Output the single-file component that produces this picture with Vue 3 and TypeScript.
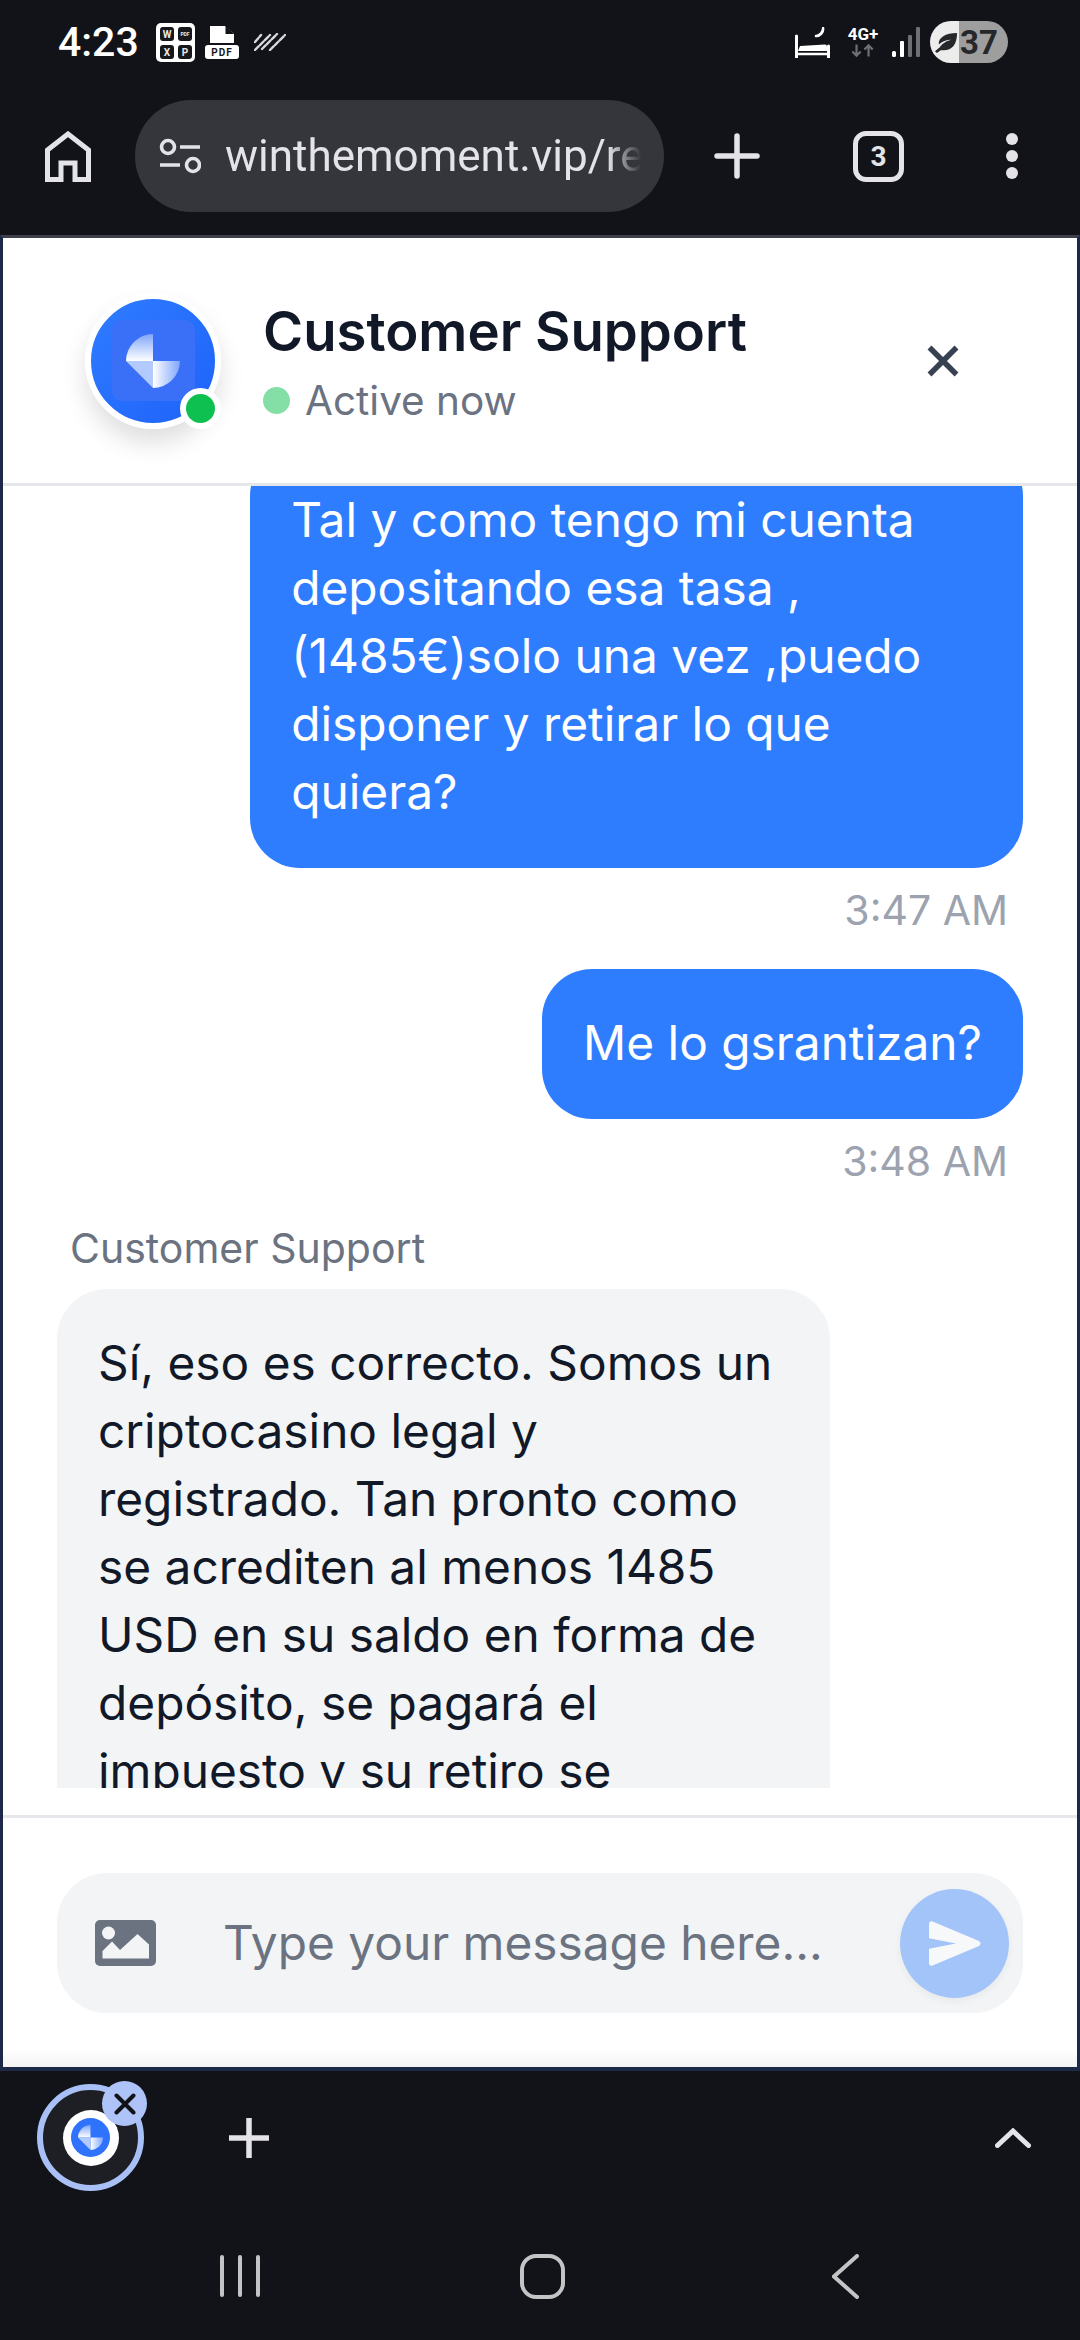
<script setup lang="ts">
import { onMounted, ref } from 'vue';

interface Message {
  id: number;
  mine: boolean;
  text: string;
  time?: string;
  sender?: string;
}

const messages: Message[] = [
  {
    id: 1,
    mine: true,
    text: 'Tal y como tengo mi cuenta depositando esa tasa , (1485€)solo una vez ,puedo disponer y retirar lo que quiera?',
    time: '3:47 AM',
  },
  { id: 2, mine: true, text: 'Me lo gsrantizan?', time: '3:48 AM' },
  {
    id: 3,
    mine: false,
    sender: 'Customer Support',
    text: 'Sí, eso es correcto. Somos un criptocasino legal y registrado. Tan pronto como se acrediten al menos 1485 USD en su saldo en forma de depósito, se pagará el impuesto y su retiro se',
  },
];

const scroller = ref<HTMLElement | null>(null);

onMounted(() => {
  // the conversation is scrolled a little past the first bubble's top
  if (scroller.value) scroller.value.scrollTop = 40;
});
</script>

<template>
  <div class="phone">
    <svg class="defs" width="0" height="0">
      <defs>
        <linearGradient id="logoTop" x1="0" y1="0" x2="0" y2="1">
          <stop offset="0" stop-color="#7fa6fc" />
          <stop offset="1" stop-color="#ffffff" />
        </linearGradient>
        <linearGradient id="logoSide" x1="0" y1="0" x2="1" y2="0">
          <stop offset="0" stop-color="#ffffff" />
          <stop offset="1" stop-color="#7fa6fc" />
        </linearGradient>
      </defs>
    </svg>

    <div class="status">
      <span class="clock">4:23</span>
      <svg class="ic-apps" viewBox="0 0 39 39">
        <rect width="39" height="39" rx="5" fill="#fff" />
        <rect x="4" y="4" width="14" height="14" rx="3" fill="#17181c" />
        <rect x="22" y="4" width="14" height="14" rx="3" fill="#17181c" />
        <rect x="4" y="22" width="14" height="14" rx="3" fill="#17181c" />
        <rect x="22" y="22" width="14" height="14" rx="3" fill="#17181c" />
        <text x="11" y="14.5" class="tile">W</text>
        <text x="29" y="12.5" class="tile tile-sm">PDF</text>
        <text x="11" y="33" class="tile">X</text>
        <text x="29" y="33" class="tile">P</text>
      </svg>
      <svg class="ic-pdf" viewBox="0 0 34 33">
        <path d="M5 0H20L29 8V17H5Z" fill="#fff" />
        <path d="M20.500 0L29 8H20.500Z" fill="#111318" />
        <rect y="19" width="34" height="14" rx="3" fill="#fff" />
        <text x="17" y="30" class="pdf-label">PDF</text>
      </svg>
      <svg class="ic-slash" viewBox="0 0 32 18">
        <path
          d="M1 9L7 2M1 17L16 2M8 16L23 1M16 17L31 2"
          stroke="#d8d8dc"
          stroke-width="2.400"
          stroke-dasharray="5 2"
          stroke-linecap="round"
          fill="none"
        />
      </svg>

      <div class="status-right">
        <svg class="ic-bed" viewBox="0 0 35 31">
          <path d="M28 0A7 7 0 0 1 20 9A8.500 8.500 0 0 0 28 0Z" fill="#fff" stroke="#fff" stroke-width="2" />
          <path d="M1.500 9V31M33.500 19V31" stroke="#fff" stroke-width="3" stroke-linecap="round" />
          <path d="M3 24H32V19.500Q32 17.500 30 17.500L5 19Z" fill="#fff" />
          <path d="M3 27H33" stroke="#fff" stroke-width="2.500" />
        </svg>
        <div class="network">
          <span class="net-label">4G+</span>
          <svg class="ic-arrows" viewBox="0 0 26 15">
            <path
              d="M6 1V13M1.500 8.500L6 13L10.500 8.500M19 14V2M14.500 6.500L19 2L23.500 6.500"
              stroke="#6d6f75"
              stroke-width="2.400"
              fill="none"
            />
          </svg>
        </div>
        <svg class="ic-signal" viewBox="0 0 28 30">
          <rect x="0" y="24" width="4" height="6" rx="1.500" fill="#fff" />
          <rect x="8" y="14" width="4" height="16" rx="1" fill="#fff" />
          <rect x="16" y="8" width="4" height="22" rx="1" fill="#6d6f75" />
          <rect x="24" y="0" width="4" height="30" rx="1" fill="#6d6f75" />
        </svg>
        <div class="battery">
          <svg class="ic-leaf" viewBox="0 0 24 24">
            <path
              d="M23 2C23 14 18 20 9 20H6L2 23L0 21L5 17C8 12 13 10 17 9C12 9 7 11 4 14C3 7 11 2 23 2Z"
              fill="#26272b"
            />
          </svg>
          <span class="battery-num">37</span>
        </div>
      </div>
    </div>

    <div class="toolbar">
      <svg class="ic-home" viewBox="0 0 46 51">
        <path d="M2.500 48.500V19L23 3L43.500 19V48.500H30V32H16V48.500Z" fill="none" stroke="#e3e3e8" stroke-width="5" />
      </svg>
      <div class="urlbar">
        <svg class="ic-tune" viewBox="0 0 42 36">
          <circle cx="9" cy="9" r="6.500" fill="none" stroke="#e3e3e8" stroke-width="3.600" />
          <circle cx="34" cy="27" r="6.500" fill="none" stroke="#e3e3e8" stroke-width="3.600" />
          <path d="M21 9H41M1 27H21" stroke="#e3e3e8" stroke-width="3.600" />
        </svg>
        <span class="url">winthemoment.vip/re</span>
      </div>
      <svg class="ic-plus" viewBox="0 0 46 46">
        <path d="M3 23H43M23 3V43" stroke="#e3e3e8" stroke-width="5.500" stroke-linecap="round" />
      </svg>
      <div class="tabs">3</div>
      <div class="dots"><i></i><i></i><i></i></div>
    </div>

    <main class="page">
      <header class="chat-head">
        <div class="avatar">
          <div class="avatar-square">
            <svg class="logo" viewBox="0 0 54 54">
              <path d="M27 27H0A27 27 0 0 1 27 0Z" fill="url(#logoTop)" />
              <path d="M27 27H54A27 27 0 0 1 27 54Z" fill="url(#logoSide)" />
              <path d="M0 27H27V54Z" fill="#b3caff" />
            </svg>
          </div>
          <span class="online"></span>
        </div>
        <div class="head-text">
          <div class="head-title">Customer Support</div>
          <div class="head-status"><span class="pulse"></span>Active now</div>
        </div>
        <svg class="ic-close" viewBox="0 0 32 32">
          <path d="M2.500 2.500L29.500 29.500M29.500 2.500L2.500 29.500" stroke="#374151" stroke-width="5.500" />
        </svg>
      </header>

      <div ref="scroller" class="messages">
        <div v-for="m in messages" :key="m.id" class="msg" :class="{ mine: m.mine }">
          <div v-if="m.sender" class="sender">{{ m.sender }}</div>
          <div class="bubble">{{ m.text }}</div>
          <div v-if="m.time" class="time">{{ m.time }}</div>
        </div>
      </div>

      <footer class="composer">
        <div class="input">
          <svg class="ic-image" viewBox="0 0 61 46">
            <rect width="61" height="46" rx="5" fill="#6b7280" />
            <circle cx="13.500" cy="13" r="6.500" fill="#f3f4f6" />
            <path d="M7.500 38.500V31L17 21.500L25 30L42.500 14L54 24.500V38.500Z" fill="#f3f4f6" />
          </svg>
          <span class="placeholder">Type your message here...</span>
          <button class="send" type="button">
            <svg class="ic-send" viewBox="0 0 52 45">
              <path
                d="M3 0.300L50 20Q53 22.500 50 25L3 44.700Q0 45 0 42V27.800L27 22.500L0 17.200V3Q0 0 3 0.300Z"
                fill="#f7f8fa"
              />
            </svg>
          </button>
        </div>
      </footer>
    </main>

    <div class="tabstrip">
      <div class="tab-bubble">
        <div class="tab-logo">
          <div class="tab-logo-blue">
            <svg class="logo-sm" viewBox="0 0 54 54">
              <path d="M27 27H0A27 27 0 0 1 27 0Z" fill="url(#logoTop)" />
              <path d="M27 27H54A27 27 0 0 1 27 54Z" fill="url(#logoSide)" />
              <path d="M0 27H27V54Z" fill="#b3caff" />
            </svg>
          </div>
        </div>
        <span class="tab-x">
          <svg class="ic-tabx" viewBox="0 0 22 22">
            <path d="M2.500 2.500L19.500 19.500M19.500 2.500L2.500 19.500" stroke="#111318" stroke-width="4" stroke-linecap="round" />
          </svg>
        </span>
      </div>
      <svg class="ic-plus2" viewBox="0 0 40 40">
        <path d="M0 20H40M20 0V40" stroke="#e3e3e8" stroke-width="5.500" />
      </svg>
      <svg class="ic-chevron" viewBox="0 0 36 20">
        <path d="M2.500 17.500L18 3L33.500 17.500" fill="none" stroke="#e3e3e8" stroke-width="5" stroke-linecap="round" />
      </svg>
    </div>

    <nav class="navbar">
      <div class="nav-recent"><i></i><i></i><i></i></div>
      <div class="nav-home"></div>
      <svg class="ic-back" viewBox="0 0 27 45">
        <path d="M25 2L2 22.500L25 43" fill="none" stroke="#c4c4c6" stroke-width="4" stroke-linecap="round" />
      </svg>
    </nav>
  </div>
</template>

<style>
html,
body {
  margin: 0;
  background: #111318;
}
</style>

<style scoped>
.phone {
  width: 1080px;
  height: 2340px;
  background: #111318;
  display: flex;
  flex-direction: column;
  overflow: hidden;
  font-family: Inter, 'Liberation Sans', sans-serif;
}
.defs {
  position: absolute;
}

/* status bar */
.status {
  height: 84px;
  display: flex;
  align-items: center;
  padding: 0 72px 0 58px;
  flex-shrink: 0;
}
.clock {
  font-family: Roboto, sans-serif;
  font-weight: 500;
  font-size: 41px;
  color: #fff;
  width: 98px;
}
.ic-apps {
  width: 39px;
  height: 39px;
  margin-top: 1px;
}
.tile {
  font-family: Roboto, sans-serif;
  font-weight: 700;
  font-size: 10px;
  fill: #e8e8e8;
  text-anchor: middle;
}
.tile-sm {
  font-size: 5px;
}
.ic-pdf {
  width: 34px;
  height: 33px;
  margin-left: 10px;
}
.pdf-label {
  font-family: Roboto, sans-serif;
  font-weight: 700;
  font-size: 10px;
  letter-spacing: 1px;
  fill: #17181c;
  text-anchor: middle;
}
.ic-slash {
  width: 32px;
  height: 18px;
  margin-left: 15px;
}
.status-right {
  margin-left: auto;
  display: flex;
  align-items: center;
}
.ic-bed {
  width: 35px;
  height: 31px;
}
.network {
  margin-left: 16px;
  width: 34px;
  display: flex;
  flex-direction: column;
  align-items: center;
}
.net-label {
  font-family: Roboto, sans-serif;
  font-weight: 700;
  font-size: 17px;
  line-height: 17px;
  color: #fff;
}
.ic-arrows {
  width: 24px;
  height: 15px;
}
.ic-signal {
  width: 28px;
  height: 30px;
  margin-left: 12px;
}
.battery {
  margin-left: 10px;
  width: 78px;
  height: 42px;
  border-radius: 21px;
  background: linear-gradient(90deg, #ececec 0 29px, #9e9e9e 29px);
  display: flex;
  align-items: center;
  padding-left: 5px;
  box-sizing: border-box;
}
.ic-leaf {
  width: 23px;
  height: 23px;
}
.battery-num {
  font-family: Roboto, sans-serif;
  font-weight: 700;
  font-size: 33px;
  color: #26272b;
  margin-left: 2px;
}

/* browser toolbar */
.toolbar {
  display: flex;
  align-items: center;
  height: 112px;
  margin-top: 16px;
  margin-bottom: 23px;
  padding-left: 45px;
  flex-shrink: 0;
}
.ic-home {
  width: 46px;
  height: 51px;
}
.urlbar {
  margin-left: 44px;
  width: 529px;
  height: 112px;
  border-radius: 56px;
  background: #35363c;
  display: flex;
  align-items: center;
  padding-left: 24px;
  box-sizing: border-box;
}
.ic-tune {
  width: 42px;
  height: 36px;
  flex-shrink: 0;
}
.url {
  margin-left: 24px;
  width: 416px;
  overflow: hidden;
  white-space: nowrap;
  font-family: Roboto, sans-serif;
  font-size: 44px;
  color: #e3e3e8;
  -webkit-mask-image: linear-gradient(90deg, #000 92%, transparent);
  mask-image: linear-gradient(90deg, #000 92%, transparent);
}
.ic-plus {
  width: 46px;
  height: 46px;
  margin-left: 50px;
}
.tabs {
  margin-left: 93px;
  width: 51px;
  height: 51px;
  box-sizing: border-box;
  border: 5px solid #e3e3e8;
  border-radius: 13px;
  color: #e3e3e8;
  font-family: Roboto, sans-serif;
  font-weight: 700;
  font-size: 28px;
  display: flex;
  align-items: center;
  justify-content: center;
}
.dots {
  margin-left: 102px;
  display: flex;
  flex-direction: column;
  gap: 5px;
}
.dots i {
  display: block;
  width: 12px;
  height: 12px;
  border-radius: 50%;
  background: #e3e3e8;
}

/* web page */
.page {
  height: 1836px;
  box-sizing: border-box;
  background: #fff;
  border-style: solid;
  border-color: #1c2a47;
  border-width: 3px 3px 4px;
  border-top-color: #3d4048;
  display: flex;
  flex-direction: column;
  flex-shrink: 0;
}
.chat-head {
  height: 248px;
  box-sizing: border-box;
  border-bottom: 3px solid #e5e7eb;
  display: flex;
  align-items: center;
  padding: 0 118px 0 82px;
  flex-shrink: 0;
}
.avatar {
  position: relative;
  width: 136px;
  height: 136px;
  box-sizing: border-box;
  border: 6px solid #fff;
  border-radius: 50%;
  background: linear-gradient(135deg, #2f7cff, #1e62fa);
  box-shadow: 0 14px 24px rgba(0, 0, 0, 0.13);
  display: flex;
  align-items: center;
  justify-content: center;
  flex-shrink: 0;
}
.avatar-square {
  width: 83px;
  height: 81px;
  border-radius: 10px;
  background: #3a70f7;
  display: flex;
  align-items: center;
  justify-content: center;
}
.logo {
  width: 54px;
  height: 54px;
}
.online {
  position: absolute;
  right: -6px;
  bottom: -6px;
  width: 41px;
  height: 41px;
  box-sizing: border-box;
  border: 6px solid #fff;
  border-radius: 50%;
  background: #0dc04f;
}
.head-text {
  margin-left: 42px;
}
.head-title {
  font-size: 54.500px;
  line-height: 76px;
  font-weight: 600;
  color: #111827;
}
.head-status {
  display: flex;
  align-items: center;
  font-size: 40.500px;
  line-height: 56px;
  color: #6b7280;
  margin-top: 4px;
}
.pulse {
  width: 27px;
  height: 27px;
  border-radius: 50%;
  background: #84dfa7;
  margin-right: 15px;
}
.ic-close {
  width: 32px;
  height: 32px;
  margin-left: auto;
}

/* conversation */
.messages {
  flex: 1;
  min-height: 0;
  overflow: hidden;
  margin-bottom: 27px;
  padding: 0 54px;
}
.msg {
  display: flex;
  flex-direction: column;
  align-items: flex-start;
  margin-bottom: 31px;
}
.msg.mine {
  align-items: flex-end;
}
.sender {
  font-size: 41px;
  line-height: 56px;
  color: #6b7280;
  padding-left: 13px;
  margin-bottom: 13px;
}
.bubble {
  max-width: 80%;
  box-sizing: border-box;
  padding: 40px 41px 42px;
  border-radius: 50px;
  background: #f3f4f6;
  color: #111827;
  font-size: 47.800px;
  line-height: 68px;
}
.mine .bubble {
  background: #2f7dff;
  color: #fff;
}
.time {
  margin-top: 14px;
  padding-right: 15px;
  font-size: 41px;
  line-height: 56px;
  color: #9ca3af;
}

/* composer */
.composer {
  border-top: 3px solid #e5e7eb;
  padding: 55px 54px 54px;
  background: linear-gradient(180deg, #fff 0, #fff 232px, #f3f3f3 100%);
  flex-shrink: 0;
}
.input {
  height: 140px;
  border-radius: 50px;
  background: #f3f4f6;
  display: flex;
  align-items: center;
  padding: 0 14px 0 38px;
}
.ic-image {
  width: 61px;
  height: 46px;
  flex-shrink: 0;
}
.placeholder {
  margin-left: 67px;
  font-size: 47.800px;
  color: #6b7280;
  white-space: nowrap;
}
.send {
  margin-left: auto;
  width: 109px;
  height: 109px;
  border: none;
  border-radius: 50%;
  padding: 0;
  background: #a3c4f9;
  box-shadow: 0 3px 8px rgba(0, 0, 0, 0.05);
  display: flex;
  align-items: center;
  justify-content: center;
  flex-shrink: 0;
}
.ic-send {
  width: 52px;
  height: 45px;
}

/* browser tab strip */
.tabstrip {
  height: 133px;
  display: flex;
  align-items: center;
  padding: 0 49px 0 37px;
  flex-shrink: 0;
}
.tab-bubble {
  position: relative;
  width: 107px;
  height: 107px;
  box-sizing: border-box;
  border: 6px solid #a8c0f5;
  border-radius: 50%;
  background: #1e1f24;
  display: flex;
  align-items: center;
  justify-content: center;
}
.tab-logo {
  width: 56px;
  height: 56px;
  border-radius: 50%;
  background: #fff;
  display: flex;
  align-items: center;
  justify-content: center;
}
.tab-logo-blue {
  width: 39px;
  height: 39px;
  border-radius: 50%;
  background: #2f72fb;
  display: flex;
  align-items: center;
  justify-content: center;
}
.logo-sm {
  width: 25px;
  height: 25px;
}
.tab-x {
  position: absolute;
  top: -9px;
  right: -9px;
  width: 45px;
  height: 45px;
  border-radius: 50%;
  background: #aec4f8;
  display: flex;
  align-items: center;
  justify-content: center;
}
.ic-tabx {
  width: 22px;
  height: 22px;
}
.ic-plus2 {
  width: 40px;
  height: 40px;
  margin-left: 85px;
}
.ic-chevron {
  width: 36px;
  height: 20px;
  margin-left: auto;
}

/* android nav */
.navbar {
  flex: 1;
  display: flex;
  align-items: center;
  padding: 8px 0 0 220px;
}
.nav-recent {
  width: 40px;
  display: flex;
  justify-content: space-between;
}
.nav-recent i {
  display: block;
  width: 4px;
  height: 42px;
  border-radius: 2px;
  background: #c4c4c6;
}
.nav-home {
  margin-left: 260px;
  width: 45px;
  height: 45px;
  box-sizing: border-box;
  border: 4px solid #c4c4c6;
  border-radius: 16px;
}
.ic-back {
  margin-left: 267px;
  width: 27px;
  height: 45px;
}
</style>
